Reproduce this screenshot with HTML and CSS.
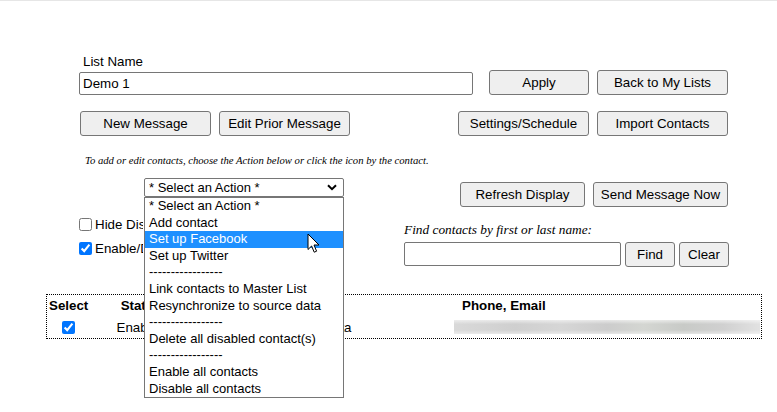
FILE: index.html
```html
<!DOCTYPE html>
<html>
<head>
<meta charset="utf-8">
<link rel="stylesheet" href="styles.css">
</head>
<body>
<div class="topline"></div>
<div class="page">
  <div class="form">
    <div class="r1">
      <div class="namefield">
        <div class="label">List Name</div>
        <div class="input name">Demo 1</div>
      </div>
      <button class="btn w100">Apply</button>
      <button class="btn w131">Back to My Lists</button>
    </div>
    <div class="r2">
      <div class="group first">
        <button class="btn w131">New Message</button>
        <button class="btn w131">Edit Prior Message</button>
      </div>
      <div class="group">
        <button class="btn w131">Settings/Schedule</button>
        <button class="btn w131">Import Contacts</button>
      </div>
    </div>
    <div class="hint">To add or edit contacts, choose the Action below or click the icon by the contact.</div>
    <div class="r4">
      <div class="selectwrap">
        <div class="select">
          <span>* Select an Action *</span>
          <svg class="chev" width="10" height="7" viewBox="0 0 10 7"><path d="M1 1.2 L5 5.2 L9 1.2" fill="none" stroke="#000" stroke-width="2"/></svg>
        </div>
        <div class="dropdown">
          <div class="opt">* Select an Action *</div>
          <div class="opt">Add contact</div>
          <div class="opt hl">Set up Facebook</div>
          <div class="opt">Set up Twitter</div>
          <div class="opt">-----------------</div>
          <div class="opt">Link contacts to Master List</div>
          <div class="opt">Resynchronize to source data</div>
          <div class="opt">-----------------</div>
          <div class="opt">Delete all disabled contact(s)</div>
          <div class="opt">-----------------</div>
          <div class="opt">Enable all contacts</div>
          <div class="opt">Disable all contacts</div>
          <svg class="cursor" width="14" height="21" viewBox="0 0 14 21"><path d="M1 1 L1 16.5 L4.6 13 L7.2 19.2 L9.6 18.2 L7 12 L12 12 Z" fill="#fff" stroke="#000" stroke-width="1" stroke-linejoin="miter"/></svg>
        </div>
      </div>
      <div class="group down">
        <button class="btn w125">Refresh Display</button>
        <button class="btn w135">Send Message Now</button>
      </div>
    </div>
    <div class="r5">
      <div class="opts">
        <label class="chk"><input type="checkbox"><span class="clip">Hide Disabled Contacts</span></label>
        <label class="chk second"><input type="checkbox" checked><span class="clip">Enable/Disable on click</span></label>
      </div>
      <div class="find">
        <div class="findlabel">Find contacts by first or last name:</div>
        <div class="findrow">
          <div class="input search"></div>
          <button class="btn w50">Find</button>
          <button class="btn w50">Clear</button>
        </div>
      </div>
    </div>
  </div>
  <div class="table">
    <div class="tr head">
      <div class="c1 th">Select</div>
      <div class="c2 th center">Status</div>
      <div class="c3 th"></div>
      <div class="c4 th ph">Phone, Email</div>
    </div>
    <div class="tr">
      <div class="c1 center"><input type="checkbox" checked></div>
      <div class="c2 center">Enabled</div>
      <div class="c3 nm"><span class="namecut">Sample Data</span></div>
      <div class="c4"><div class="blur"></div></div>
    </div>
  </div>
</div>
</body>
</html>
```
FILE: styles.css
```css
html, body { height: 100%; }
body {
  margin: 0;
  font-family: "Liberation Sans", Arial, sans-serif;
  font-size: 13.333px;
  color: #000;
  background: #fff;
}
.topline { height: 1px; background: #e6e6e6; }
.page { padding: 53px 0 0 46px; min-height: 411px; box-sizing: border-box; }
.form { margin-left: 33px; width: 649px; }

.btn {
  box-sizing: border-box;
  height: 25px;
  padding: 0;
  background: #efefef;
  border: 1px solid #767676;
  border-radius: 3px;
  font-family: "Liberation Sans", Arial, sans-serif;
  font-size: 13.333px;
  color: #000;
}
.w50 { width: 50px; }
.w100 { width: 100px; }
.w125 { width: 125px; }
.w131 { width: 131px; }
.w135 { width: 135px; }

.input {
  box-sizing: border-box;
  height: 23px;
  border: 1px solid #767676;
  border-radius: 2px;
  padding: 0 3px;
  line-height: 21px;
  background: #fff;
}

.r1 { display: flex; align-items: flex-end; gap: 8px; }
.namefield { width: 394px; margin-right: 8px; }
.label { line-height: 16px; margin: 0 0 2px 4px; }

.r2 { display: flex; justify-content: space-between; margin-top: 16px; }
.group { display: flex; gap: 8px; }
.group.first { margin-left: 1px; }

.hint {
  margin: 19px 0 0 6px;
  font-family: "Liberation Serif", "Times New Roman", serif;
  font-style: italic;
  font-size: 10.667px;
  line-height: 12px;
}

.r4 { display: flex; justify-content: space-between; align-items: flex-start; margin-top: 11px; }
.selectwrap { position: relative; margin-left: 65px; width: 200px; }
.select {
  box-sizing: border-box;
  height: 19px;
  border: 1px solid #767676;
  border-radius: 2px;
  padding: 0 4px;
  font-size: 13px;
  line-height: 17px;
  display: flex;
  justify-content: space-between;
  align-items: center;
}
.chev { margin-right: 2px; }
.dropdown {
  position: absolute;
  top: 100%;
  left: 0;
  width: 200px;
  box-sizing: border-box;
  border: 1px solid #767676;
  background: #fff;
  z-index: 5;
  font-size: 13px;
}
.opt { height: 16.6px; line-height: 16.6px; padding-left: 4px; white-space: nowrap; }
.opt.hl { background: #1e90ff; color: #fff; }
.cursor { position: absolute; left: 162px; top: 35px; }
.group.down { margin-top: 4px; }

.r5 { display: grid; grid-template-columns: 325px 1fr; margin-top: 7px; }
.chk { display: flex; align-items: center; height: 20px; white-space: nowrap; }
.chk.second { margin-top: 4px; }
.chk input { margin: 0 3px 0 0; width: 13px; height: 13px; }
.clip { display: block; width: 48px; overflow: hidden; }
.find { padding-top: 8px; }
.findlabel {
  font-family: "Liberation Serif", "Times New Roman", serif;
  font-style: italic;
  font-size: 13.333px;
  line-height: 15px;
}
.findrow { display: flex; gap: 4px; margin-top: 5px; align-items: flex-start; }
.input.search { width: 217px; height: 24px; }

.table {
  margin-top: 27px;
  width: 716px;
  box-sizing: border-box;
  border: 1px dotted #000;
}
.tr { display: grid; grid-template-columns: 43px 102px 262px 1fr; height: 22px; align-items: center; }
.tr.head { height: 21px; }
.th { font-weight: bold; }
.c1.th { padding-left: 2px; }
.center { text-align: center; display: flex; justify-content: center; align-items: center; }
.c1 input { margin: 0; width: 13px; height: 13px; }
.ph { padding-left: 8px; }
.nm { padding-left: 152px; white-space: nowrap; }
.namecut { display: inline-block; direction: rtl; width: 7.5px; overflow: hidden; vertical-align: top; }
.blur {
  width: 306px;
  height: 14px;
  background:
    linear-gradient(to bottom, rgba(255,255,255,0.55), rgba(255,255,255,0) 30%, rgba(255,255,255,0) 70%, rgba(255,255,255,0.5)),
    linear-gradient(to right, #d9d9d9, #cfcfcf 20%, #d6d6d6 35%, #cccccc 50%, #d4d6d2 62%, #c8cac7 75%, #d0d0d0 88%, #e2e2e2 100%);
}
```
